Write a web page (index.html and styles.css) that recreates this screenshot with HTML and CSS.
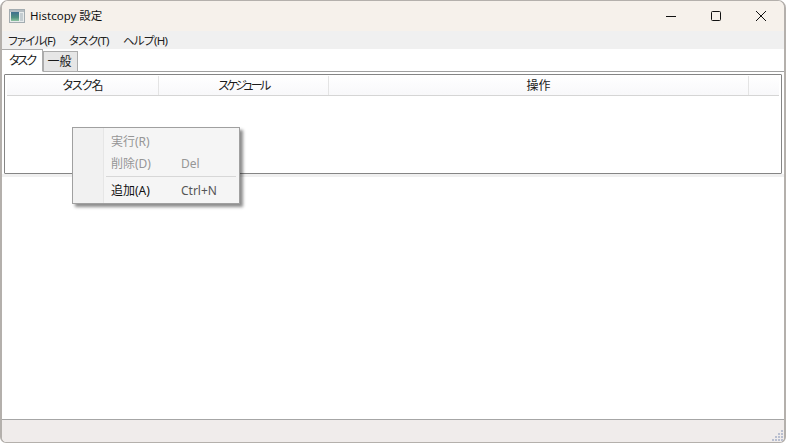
FILE: index.html
```html
<!DOCTYPE html>
<html lang="ja">
<head>
<meta charset="utf-8">
<title>Histcopy 設定</title>
<link rel="stylesheet" href="styles.css">
</head>
<body>
<div class="window">
  <header class="titlebar">
    <svg class="app-icon" width="16" height="14" viewBox="0 0 16 14">
      <defs>
        <linearGradient id="pane" x1="0" y1="0" x2="0" y2="1">
          <stop offset="0" stop-color="#3f6f8f"/>
          <stop offset="0.6" stop-color="#4f9080"/>
          <stop offset="1" stop-color="#8fc4a0"/>
        </linearGradient>
      </defs>
      <rect x="0.5" y="0.5" width="15" height="13" fill="#e8ecec" stroke="#a3acb0"/>
      <rect x="1" y="1" width="14" height="2" fill="#b4bdc2"/>
      <rect x="2" y="3" width="8" height="9" fill="url(#pane)"/>
      <rect x="11" y="4" width="3" height="8" fill="#c4cdd1"/>
    </svg>
    <span class="title">Histcopy 設定</span>
    <div class="controls">
      <button class="ctl"><svg width="12" height="12" viewBox="0 0 12 12"><path d="M1 6.5h10" stroke="#111" stroke-width="1"/></svg></button>
      <button class="ctl"><svg width="12" height="12" viewBox="0 0 12 12"><rect x="1.5" y="1.5" width="9" height="9" rx="1" fill="none" stroke="#111"/></svg></button>
      <button class="ctl"><svg width="12" height="12" viewBox="0 0 12 12"><path d="M1 1l10 10M11 1L1 11" stroke="#111" stroke-width="1"/></svg></button>
    </div>
  </header>
  <nav class="menubar">
    <span class="menu-item menu-file">ファイル(F)</span>
    <span class="menu-item menu-task">タスク(T)</span>
    <span class="menu-item menu-help">ヘルプ(H)</span>
  </nav>
  <div class="tabs">
    <span class="tab active">タスク</span>
    <span class="tab">一般</span>
  </div>
  <main class="content">
    <section class="panel">
      <div class="table-head">
        <span class="col col-name">タスク名</span>
        <span class="col col-sched">スケジュール</span>
        <span class="col col-op">操作</span>
        <span class="col col-rest"></span>
      </div>
    </section>
    <div class="band"></div>
  </main>
  <footer class="statusbar">
    <svg class="grip" width="12" height="12" viewBox="0 0 12 12">
      <g fill="#b9bfd0">
        <rect x="9" y="0" width="2" height="2"/>
        <rect x="6" y="3" width="2" height="2"/><rect x="9" y="3" width="2" height="2"/>
        <rect x="3" y="6" width="2" height="2"/><rect x="6" y="6" width="2" height="2"/><rect x="9" y="6" width="2" height="2"/>
        <rect x="0" y="9" width="2" height="2"/><rect x="3" y="9" width="2" height="2"/><rect x="6" y="9" width="2" height="2"/><rect x="9" y="9" width="2" height="2"/>
      </g>
    </svg>
  </footer>
  <div class="context-menu">
    <div class="cm-row disabled"><span class="cm-label">実行(R)</span></div>
    <div class="cm-row disabled"><span class="cm-label">削除(D)</span><span class="cm-key">Del</span></div>
    <div class="cm-sep"></div>
    <div class="cm-row"><span class="cm-label">追加(A)</span><span class="cm-key">Ctrl+N</span></div>
  </div>
</div>
</body>
</html>
```
FILE: styles.css
```css
* { box-sizing: border-box; }
html, body { margin: 0; height: 100%; overflow: hidden; background: #fff; }
body {
  font: 12px/16px "Noto Sans", "Noto Sans CJK JP", sans-serif;
  font-feature-settings: "palt";
  color: #1a1a1a;
}
.window {
  position: relative;
  width: 786px; height: 443px;
  display: flex; flex-direction: column;
  background: #fff;
  border: 1px solid #b4b0ac;
  border-width: 1px 2px 1px 2px;
  border-radius: 8px 8px 6px 6px;
  overflow: hidden;
}
.titlebar {
  height: 30px; flex: none;
  display: flex; align-items: center;
  background: #f6f1eb;
  padding-left: 7px;
}
.app-icon { flex: none; }
.title { margin-left: 5px; font-size: 11.5px; color: #111; }
.controls { margin-left: auto; display: flex; margin-right: 1px; }
.ctl {
  width: 45px; height: 30px; padding: 0; border: 0; background: none;
  display: flex; align-items: center; justify-content: center;
}
.menubar {
  height: 18px; flex: none;
  display: flex; align-items: center; gap: 14px;
  background: #f0f0f0;
  padding: 2px 0 0 6px;
  font-size: 11.5px;
  color: #222;
}
.menu-file { letter-spacing: -0.85px; }
.menu-task { letter-spacing: -0.65px; }
.menu-help { letter-spacing: -0.65px; }
.tabs {
  height: 23px; flex: none;
  display: flex; align-items: flex-end;
  border-bottom: 1px solid #a0a0a0;
  background: #fff;
}
.tab {
  height: 21px; width: 35px;
  border: 1px solid #acacac;
  background: #e6e6e6;
  margin-bottom: -1px;
  font-size: 12px; line-height: 19px;
  text-align: center;
  padding-right: 2px;
}
.tab.active {
  height: 23px; width: 41px;
  background: #fff; border-bottom-color: #fff; border-left: 0;
  line-height: 21px;
  padding-right: 0;
  letter-spacing: -2px;
}
.content { flex: 1; display: flex; flex-direction: column; min-height: 0; }
.panel {
  height: 100px; flex: none;
  margin: 2px 2px 0 2px;
  border: 1px solid #858585;
  border-radius: 1px;
  padding: 1px 2px;
  background: #fff;
}
.table-head {
  display: flex; height: 20px;
  background: linear-gradient(#fff, #f8f8fa);
  border-bottom: 1px solid #d5d5d5;
  font-size: 12px; line-height: 20px;
}
.col { text-align: center; border-right: 1px solid #e4e4e4; }
.col-name { width: 152px; letter-spacing: -1px; }
.col-sched { width: 170px; letter-spacing: -2.6px; }
.col-op { width: 420px; }
.col-rest { flex: 1; border-right: 0; }
.band { height: 3px; background: #f0f0f0; }
.statusbar {
  margin-top: auto; height: 23px; flex: none;
  background: #f0eceb;
  border-top: 1px solid #a6a6a6;
  display: flex; justify-content: flex-end; align-items: flex-end;
}
.context-menu {
  position: absolute; left: 70px; top: 126px;
  width: 168px; height: 77px;
  background: #f5f5f5;
  border: 1px solid #a0a0a0;
  box-shadow: 3px 3px 3px rgba(0,0,0,.45);
  padding-top: 3px;
  background-image: linear-gradient(to right, #f1f1f1 30px, #e6e6e6 30px, #e6e6e6 31px, #f5f5f5 31px);
  font-size: 12px;
}
.cm-row { height: 22px; display: flex; align-items: center; padding-left: 38px; color: #111; }
.cm-label { width: 70px; }
.cm-key { color: #555; }
.cm-row.disabled, .cm-row.disabled .cm-key { color: #969696; }
.cm-sep { height: 1px; background: #d7d7d7; margin: 1px 3px 3px 33px; }
```
